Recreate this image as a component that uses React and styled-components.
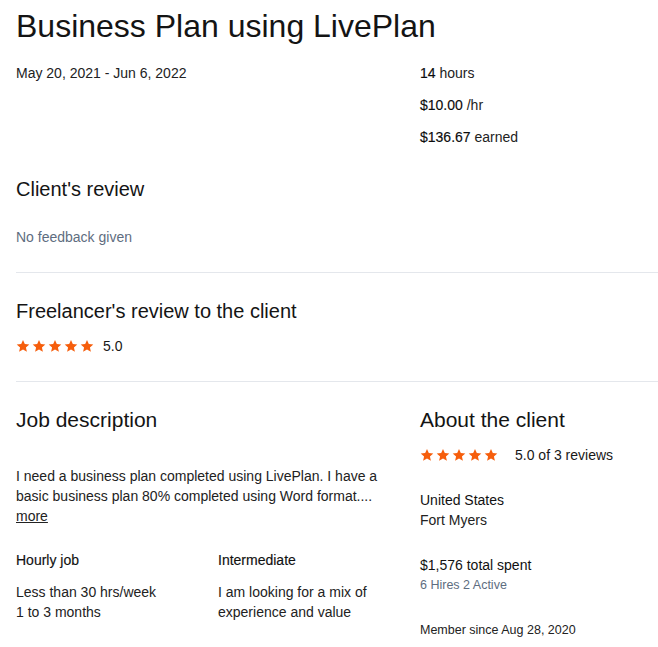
import styled, { createGlobalStyle } from 'styled-components'

const GlobalStyle = createGlobalStyle`
    body {
        margin: 0;
        background: #fff;
        font-family: "Liberation Sans", Arial, sans-serif;
        color: #181818;
    }
`

const Star = () => (
    <svg width="14" height="14" viewBox="0 0 24 24">
        <path
            fill="#f65e0c"
            d="M12 1.5l3.1 7.1 7.7.7-5.8 5.1 1.7 7.6L12 18l-6.7 4 1.7-7.6L1.2 9.3l7.7-.7z"
        />
    </svg>
)

const Rating = ({ value, gap }) => (
    <RatingRow $gap={gap}>
        <Stars>
            {[0, 1, 2, 3, 4].map((i) => <Star key={i} />)}
        </Stars>
        <RatingText>{value}</RatingText>
    </RatingRow>
)

const App = () => {
    return (
        <Page>
            <GlobalStyle />
            <Title>Business Plan using LivePlan</Title>

            <TopRow>
                <Line>May 20, 2021 - Jun 6, 2022</Line>
                <Stats>
                    <Line><Strong>14</Strong> hours</Line>
                    <Line><Strong>$10.00</Strong> /hr</Line>
                    <Line><Strong>$136.67</Strong> earned</Line>
                </Stats>
            </TopRow>

            <Section $first>
                <Heading>Client's review</Heading>
                <Muted>No feedback given</Muted>
            </Section>

            <Divider />

            <Section $tight>
                <Heading>Freelancer's review to the client</Heading>
                <Rating value="5.0" gap={9} />
            </Section>

            <Divider />

            <Columns>
                <div>
                    <Heading $big>Job description</Heading>
                    <Description>
                        I need a business plan completed using LivePlan. I have a basic
                        business plan 80% completed using Word format....
                        <br />
                        <MoreLink href="#">more</MoreLink>
                    </Description>
                    <Details>
                        <DetailBlock>
                            <Label>Hourly job</Label>
                            <div>
                                <Line>Less than 30 hrs/week</Line>
                                <Line>1 to 3 months</Line>
                            </div>
                        </DetailBlock>
                        <DetailBlock>
                            <Label>Intermediate</Label>
                            <div>
                                <Line>I am looking for a mix of</Line>
                                <Line>experience and value</Line>
                            </div>
                        </DetailBlock>
                    </Details>
                </div>

                <ClientInfo>
                    <Heading $big>About the client</Heading>
                    <Rating value="5.0 of 3 reviews" gap={17} />
                    <InfoGroup>
                        <Line $medium>United States</Line>
                        <Line>Fort Myers</Line>
                    </InfoGroup>
                    <InfoGroup>
                        <Line $medium>$1,576 total spent</Line>
                        <Small $muted>6 Hires 2 Active</Small>
                    </InfoGroup>
                    <InfoGroup>
                        <Small>Member since Aug 28, 2020</Small>
                    </InfoGroup>
                </ClientInfo>
            </Columns>
        </Page>
    )
}

const Page = styled.div`
    padding: 6px 0 0 16px;
    width: 642px;
`

const Title = styled.h1`
    margin: 0;
    font-size: 32px;
    line-height: 40px;
    font-weight: 400;
    color: #141414;
`

const TopRow = styled.div`
    display: grid;
    grid-template-columns: 404px 1fr;
    margin-top: 17px;
`

const Stats = styled.div`
    display: flex;
    flex-direction: column;
    gap: 12px;
`

const Line = styled.div`
    font-size: 14px;
    line-height: 20px;
    color: ${(p) => (p.$medium ? '#111' : '#222')};
`

const Strong = styled.span`
    color: #0c0c0c;
    -webkit-text-stroke: 0.15px #0c0c0c;
`

const Section = styled.section`
    display: flex;
    flex-direction: column;
    gap: ${(p) => (p.$tight ? '11px' : '24px')};
    margin-top: ${(p) => (p.$first ? '28px' : '0')};
    padding-bottom: 25px;
`

const Heading = styled.h2`
    margin: 0;
    font-size: ${(p) => (p.$big ? '21px' : '20px')};
    line-height: 28px;
    font-weight: 400;
    color: #141414;
`

const Muted = styled.div`
    font-size: 14px;
    line-height: 20px;
    color: #5e6d80;
`

const Divider = styled.hr`
    margin: 0 0 24px;
    border: 0;
    border-top: 1px solid #e4e7ec;
`

const RatingRow = styled.div`
    display: flex;
    align-items: center;
    gap: ${(p) => p.$gap}px;
    height: 20px;
`

const Stars = styled.div`
    display: flex;
    gap: 2px;
`

const RatingText = styled.span`
    font-size: 14px;
    color: #181818;
`

const Columns = styled.div`
    display: grid;
    grid-template-columns: 374px 1fr;
    column-gap: 30px;
`

const Description = styled.p`
    margin: 32px 0 0;
    font-size: 14px;
    line-height: 20px;
    color: #222;
`

const MoreLink = styled.a`
    color: #222;
    text-decoration: underline;
`

const Details = styled.div`
    display: grid;
    grid-template-columns: 202px 1fr;
    margin-top: 24px;
`

const DetailBlock = styled.div`
    display: flex;
    flex-direction: column;
    gap: 12px;
`

const Label = styled.div`
    font-size: 14px;
    line-height: 20px;
    color: #111;
    -webkit-text-stroke: 0.15px #111;
`

const ClientInfo = styled.div`
    display: flex;
    flex-direction: column;
    gap: 11px;
`

const InfoGroup = styled.div`
    margin-top: 14px;
`

const Small = styled.div`
    font-size: 12.5px;
    line-height: 20px;
    color: ${(p) => (p.$muted ? '#5e6d80' : '#222')};
`

export default App
